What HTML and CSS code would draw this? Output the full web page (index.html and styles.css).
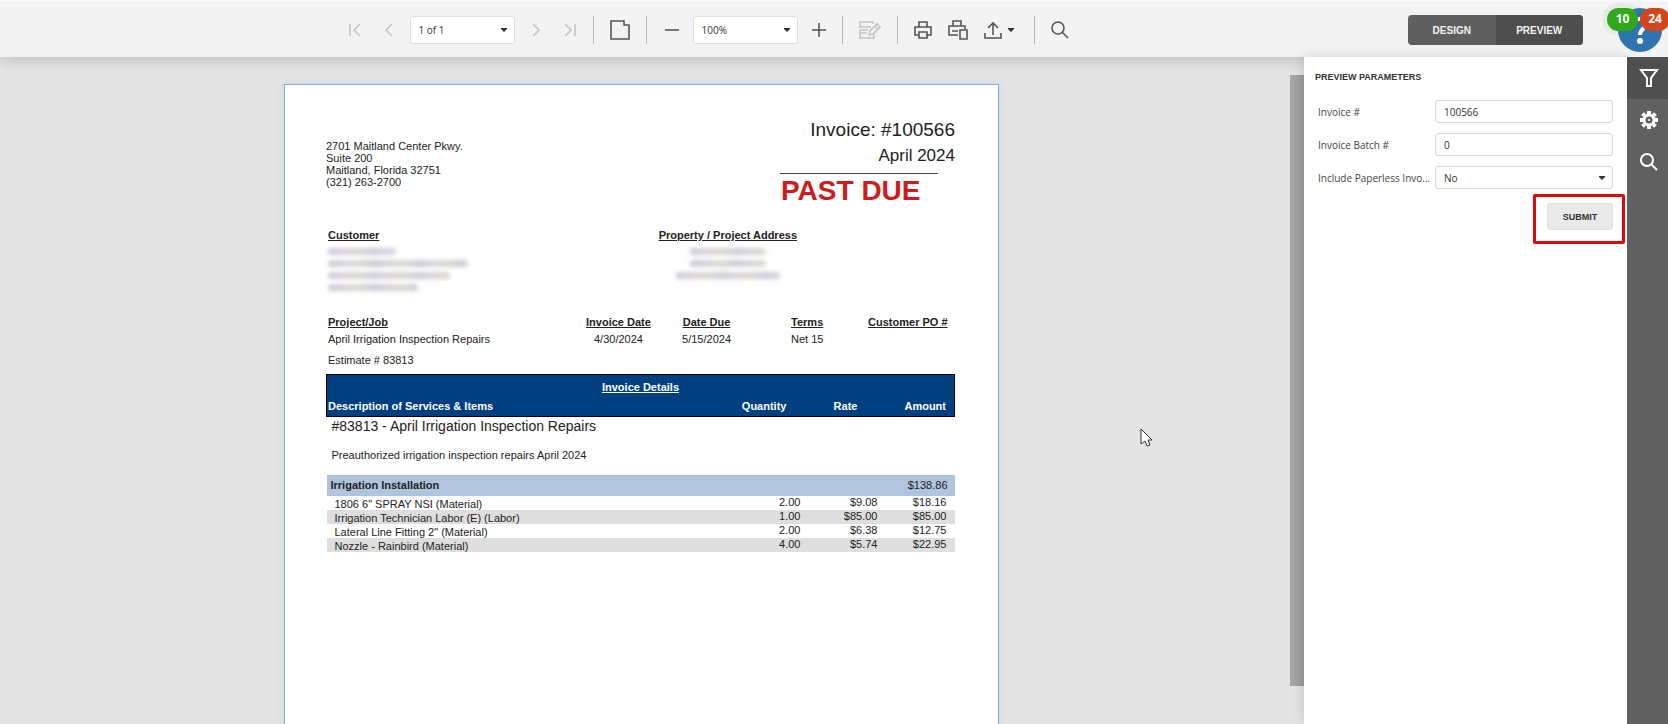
FILE: index.html
```html
<!DOCTYPE html>
<html lang="en">
<head>
<meta charset="utf-8">
<title>Invoice Preview</title>
<link rel="stylesheet" href="styles.css">
</head>
<body>
<div class="app">
  <header class="topbar">
    <div class="tools" role="toolbar" aria-label="Report viewer">
      <button class="tool muted first" aria-label="First page"><svg width="14" height="14" viewBox="0 0 14 14"><path d="M2 1v12M12 1L6 7l6 6"/></svg></button>
      <button class="tool muted prev" aria-label="Previous page"><svg width="10" height="14" viewBox="0 0 10 14"><path d="M8 1L2 7l6 6"/></svg></button>
      <span class="picker pager"><select aria-label="Page"><option>1 of 1</option></select><svg class="caret" width="6" height="4" viewBox="0 0 6 4"><path d="M0 0h6v1L3 4 0 1z"/></svg></span>
      <button class="tool muted next" aria-label="Next page"><svg width="10" height="14" viewBox="0 0 10 14"><path d="M2 1l6 6-6 6"/></svg></button>
      <button class="tool muted last" aria-label="Last page"><svg width="14" height="14" viewBox="0 0 14 14"><path d="M12 1v12M2 1l6 6-6 6"/></svg></button>
      <span class="sep"></span>
      <button class="tool" aria-label="Multipage mode"><svg width="20" height="20" viewBox="0 0 20 20"><path d="M1 1h13v4h5v14H1z"/></svg></button>
      <span class="sep"></span>
      <div class="zooming">
        <button class="tool" aria-label="Zoom out"><svg width="14" height="14" viewBox="0 0 14 14"><path d="M0 7h14"/></svg></button>
        <span class="picker zoom"><select aria-label="Zoom"><option>100%</option></select><svg class="caret" width="6" height="4" viewBox="0 0 6 4"><path d="M0 0h6v1L3 4 0 1z"/></svg></span>
        <button class="tool" aria-label="Zoom in"><svg width="14" height="14" viewBox="0 0 14 14"><path d="M0 7h14M7 0v14"/></svg></button>
      </div>
      <span class="sep"></span>
      <button class="tool muted" aria-label="Highlight editing fields"><svg width="22" height="20" viewBox="0 0 22 20"><path d="M14 4V2H1v5h11M9 10H1M1 10v8h14v-4M1 13h7M10 15l1-4 7-7 3 3-7 7zM16 6l3 3"/></svg></button>
      <span class="sep"></span>
      <button class="tool" aria-label="Print"><svg width="18" height="18" viewBox="0 0 18 18"><path d="M5 6V1h8v5M5 14H1V6h16v8h-4M5 11h8v6H5z"/></svg></button>
      <button class="tool" aria-label="Print page"><svg width="20" height="20" viewBox="0 0 20 20"><path d="M5 6V1h8v5M10 15H1V6h16v3M4 11h6M12 10h7v9h-7z"/></svg></button>
      <button class="tool export" aria-label="Export to"><svg width="18" height="18" viewBox="0 0 18 18"><path d="M1 12v5h16v-5M9 14V2M4 7l5-5 5 5"/></svg><svg class="caret" width="6" height="4" viewBox="0 0 6 4"><path d="M0 0h6v1L3 4 0 1z"/></svg></button>
      <span class="sep"></span>
      <button class="tool" aria-label="Search"><svg width="18" height="18" viewBox="0 0 18 18"><circle cx="7" cy="7" r="6"/><path d="M11 11l6 6"/></svg></button>
    </div>
    <div class="modes">
      <button>DESIGN</button><button class="on">PREVIEW</button>
    </div>
    <button class="help" aria-label="Help">
      <svg width="44" height="44" viewBox="0 0 44 44"><circle cx="22" cy="22" r="22" fill="#2d74b0"/><path d="M16 16c1-7 13-7 12 0-1 5-6 5-6 11" fill="none" stroke="#fff" stroke-width="4"/><circle cx="22" cy="33" r="3" fill="#fff"/></svg>
      <span class="badge green">10</span><span class="badge red">24</span>
    </button>
  </header>

  <div class="body">
    <main class="viewer">
      <article class="paper">
        <section class="head">
          <address>2701 Maitland Center Pkwy.<br>Suite 200<br>Maitland, Florida 32751<br>(321) 263-2700</address>
          <div class="title">
            <h1>Invoice: #100566</h1>
            <p class="month">April 2024</p>
            <p class="due">PAST DUE</p>
          </div>
        </section>
        <section class="parties">
          <div class="party">
            <h2>Customer</h2>
            <i class="smear w1"></i><i class="smear w2"></i><i class="smear w3"></i><i class="smear w4"></i>
          </div>
          <div class="party site">
            <h2>Property / Project Address</h2>
            <i class="smear w5"></i><i class="smear w5"></i><i class="smear w6"></i>
          </div>
        </section>
        <table class="meta">
          <thead><tr><th class="job">Project/Job</th><th class="date">Invoice Date</th><th class="dued">Date Due</th><th class="terms">Terms</th><th class="po">Customer PO #</th></tr></thead>
          <tbody><tr><td class="job">April Irrigation Inspection Repairs</td><td>4/30/2024</td><td>5/15/2024</td><td>Net 15</td><td></td></tr></tbody>
        </table>
        <p class="estimate">Estimate # 83813</p>
        <section class="details">
          <table class="lines">
            <colgroup><col><col class="c-qty"><col class="c-num"><col class="c-num"></colgroup>
            <thead>
              <tr class="cap"><th colspan="4">Invoice Details</th></tr>
              <tr class="cols"><th class="desc">Description of Services &amp; Items</th><th class="qty">Quantity</th><th class="rate">Rate</th><th class="amt">Amount</th></tr>
            </thead>
            <tbody>
              <tr class="job-name"><td colspan="4">#83813 - April Irrigation Inspection Repairs</td></tr>
              <tr class="note"><td colspan="4">Preauthorized irrigation inspection repairs April 2024</td></tr>
              <tr class="group"><th colspan="3">Irrigation Installation</th><td>$138.86</td></tr>
              <tr class="item"><td>1806 6" SPRAY NSI (Material)</td><td>2.00</td><td>$9.08</td><td>$18.16</td></tr>
              <tr class="item"><td>Irrigation Technician Labor (E) (Labor)</td><td>1.00</td><td>$85.00</td><td>$85.00</td></tr>
              <tr class="item"><td>Lateral Line Fitting 2" (Material)</td><td>2.00</td><td>$6.38</td><td>$12.75</td></tr>
              <tr class="item"><td>Nozzle - Rainbird (Material)</td><td>4.00</td><td>$5.74</td><td>$22.95</td></tr>
            </tbody>
          </table>
        </section>
      </article>
    </main>
    <div class="scroll"><div class="thumb"></div></div>
    <form class="params">
      <h2>PREVIEW PARAMETERS</h2>
      <div class="field"><label for="inv">Invoice #</label><input id="inv" type="text" value="100566"></div>
      <div class="field"><label for="batch">Invoice Batch #</label><input id="batch" type="text" value="0"></div>
      <div class="field"><label for="paper">Include Paperless Invo...</label><span class="picker"><select id="paper"><option>No</option></select><svg class="caret" width="6" height="4" viewBox="0 0 6 4"><path d="M0 0h6v1L3 4 0 1z"/></svg></span></div>
      <div class="callout"><button type="button">SUBMIT</button></div>
    </form>
    <nav class="rail" aria-label="Panels">
      <button class="on" aria-label="Parameters"><svg width="20" height="20" viewBox="0 0 20 20"><path d="M2 2h16l-6 8v8H8v-8z"/></svg></button>
      <button aria-label="Settings"><svg width="20" height="20" viewBox="0 0 20 20"><circle cx="10" cy="10" r="5" stroke-width="3"/><path stroke-width="4" d="M10 1v3M10 16v3M1 10h3M16 10h3M3.600 3.600l2 2M14.400 14.400l2 2M3.600 16.400l2-2M14.400 5.600l2-2"/><circle cx="10" cy="10" r="1" fill="#fff" stroke="none"/></svg></button>
      <button aria-label="Search"><svg width="20" height="20" viewBox="0 0 20 20"><circle cx="8" cy="8" r="6"/><path d="M12 12l6 6"/></svg></button>
    </nav>
  </div>
  <svg class="pointer" width="13" height="20" viewBox="0 0 13 20"><path d="M1 1v15l4-3 2 5 3-1-2-5h4z" fill="#fff" stroke="#333"/></svg>
</div>
</body>
</html>
```
FILE: styles.css
```css
* { box-sizing: border-box; }
body { margin: 0; overflow: hidden; font-family: "Liberation Sans", Arial, sans-serif; font-size: 11px; color: #222; }
h1, h2, p { margin: 0; font-weight: 400; }
button { border: 0; padding: 0; background: none; font: inherit; color: inherit; }
.app { display: flex; flex-direction: column; height: 100vh; position: relative; background: #e4e4e4; }

/* top bar */
.topbar { display: flex; align-items: center; height: 57px; padding: 2px 0 0; background: #f3f3f3; border-top: 1px solid #fafafa; box-shadow: 0 2px 16px rgba(0, 0, 0, .2); position: relative; z-index: 1; }
.tools { flex: 1; display: flex; align-items: center; justify-content: center; gap: 16px; padding-left: 8px; }
.tool { display: flex; align-items: center; flex: none; }
.tool svg { fill: none; stroke: #555; stroke-width: 1.6; }
.rail svg { fill: none; stroke: #fff; stroke-width: 2; }
.tool.muted svg { stroke: #c4c4c4; }
.first, .next { margin-right: 6px; }
.export { gap: 6px; margin-right: 4px; }
.zooming { display: flex; align-items: center; gap: 14px; margin-left: 2px; }
.sep { width: 1px; height: 28px; background: #b8b8b8; }
.picker { display: grid; align-items: center; }
.picker select { grid-area: 1 / 1; appearance: none; width: 100%; height: 28px; padding: 0 8px; border: 1px solid #dedede; border-radius: 3px; background: #fff; font: 10px "Open Sans", sans-serif; color: #333; }
.tools .picker { width: 105px; }
.caret { grid-area: 1 / 1; justify-self: end; margin-right: 8px; }
.tool .caret { margin: 0; }
.caret, .tool .caret { fill: #333; stroke: none; }
.modes { display: flex; flex: none; width: 175px; height: 30px; margin-right: 35px; border-radius: 4px; overflow: hidden; background: #5f5f5f; color: #f3f3f3; font-size: 10px; font-weight: 700; }
.modes button { flex: 1; }
.modes .on { background: #4e4e4e; }
.help { position: relative; flex: none; width: 44px; height: 44px; margin-right: 6px; }
.help svg { display: block; }
.badge { position: absolute; top: 0; height: 23px; border-radius: 12px; font: 700 12px/22px "Open Sans", sans-serif; color: #fff; text-align: center; }
.green { left: -11px; width: 31px; background: #2fa81b; box-shadow: 0 0 0 5px rgba(47, 168, 27, .07); }
.red { left: 22px; width: 30px; background: #d3451a; }

/* viewer */
.body { flex: 1; min-height: 0; display: flex; }
.viewer { flex: 1; overflow: hidden; padding: 27px 7px 0 0; }
.paper { width: 715px; min-height: 924px; margin: 0 auto; padding: 34px 43px 0 41px; background: #fff; border: 1px solid #7fabdc; box-shadow: 0 0 8px #cdd4de; line-height: 12px; }
.head { display: flex; justify-content: space-between; align-items: flex-start; height: 105px; }
address { padding-top: 21px; font-style: normal; }
.title { text-align: right; }
h1 { font-size: 19px; line-height: 22px; }
.month { font-size: 17px; line-height: 18px; padding-top: 6px; }
.due { width: 158px; margin: 8px 17px 0 0; border-top: 1px solid #444; color: #d01a1e; font-size: 28px; font-weight: 700; line-height: 34px; text-align: left; padding-left: 1px; }
.parties { display: flex; justify-content: space-between; height: 92px; padding: 5px 158px 0 2px; }
.party { display: flex; flex-direction: column; gap: 5px; }
.party h2 { font-size: 11px; font-weight: 700; text-decoration: underline; margin-bottom: 2px; }
.site { align-items: center; }
.smear { height: 7px; border-radius: 4px; background: repeating-linear-gradient(90deg, #c9c9d2, #d8d2dc 16px, #d9d8cc 30px, #cccfdc 44px); filter: blur(2px); }
.w1 { width: 68px; } .w2 { width: 140px; } .w3 { width: 122px; } .w4 { width: 90px; } .w5 { width: 76px; } .w6 { width: 104px; }
table { width: 100%; border-collapse: collapse; table-layout: fixed; }
th, td { padding: 0; }
.meta th { text-decoration: underline; padding-bottom: 5px; }
.meta td { text-align: center; }
.meta .job { width: 40%; text-align: left; padding-left: 2px; }
.meta .date { width: 13%; } .meta .dued { width: 15%; } .meta .terms { width: 17%; }
.estimate { padding: 9px 0 8px 2px; }
.c-qty { width: 80px; }
.c-num { width: 77px; }
.lines thead { background: #004080; color: #fff; border: 1px solid #000; }
.cap th { padding: 6px 0 7px; font-size: 11px; text-decoration: underline; }
.cols th { padding: 0 8px 4px 0; text-align: right; }
.cols .desc { padding-left: 1px; text-align: left; }
.cols .qty { padding-right: 14px; }
.cols .rate { padding-right: 20px; }
.job-name td { padding: 0 5px; font-size: 14px; line-height: 18px; height: 32px; vertical-align: top; }
.note td { padding: 0 5px 14px; }
.group { background: #b0c4de; height: 21px; }
.group th { text-align: left; padding-left: 4px; }
.group td { text-align: right; padding-right: 7px; }
.item td { text-align: right; padding-bottom: 2px; }
.item td:first-child { text-align: left; padding: 2px 0 0 8px; }
.item td:last-child { padding-right: 8px; }
.item:nth-child(odd) { background: #dedede; }

.scroll { flex: none; width: 14px; padding: 18px 0 38px; }
.thumb { height: 100%; background: linear-gradient(90deg, #a9a9a9, #9c9c9c); }

/* parameters */
.params { position: relative; z-index: 2; flex: none; width: 323px; padding: 14px 14px 0 11px; background: #fff; font-family: "Open Sans", sans-serif; box-shadow: 0 0 12px rgba(0, 0, 0, .15); }
.params h2 { font: 700 9px/12px "Liberation Sans", sans-serif; margin-bottom: 17px; color: #333; }
.field { display: grid; grid-template-columns: 117px 1fr; align-items: center; height: 23px; margin: 0 0 10px 3px; font-size: 10px; white-space: nowrap; color: #444; }
.field input, .field .picker select { width: 100%; height: 23px; padding: 0 8px; border: 1px solid #d8d8d8; border-radius: 3px; font: 10px "Open Sans", sans-serif; color: #333; background: #fff; }
.callout { width: 92px; height: 50px; margin: -5px -12px 0 auto; padding: 6px 9px; border: 3px solid #dc0a0c; border-radius: 2px; }
.callout button { display: block; width: 66px; height: 27px; margin-left: 2px; border: 1px solid #e0e0e0; border-radius: 3px; background: #e9e9e9; font: 700 9px "Liberation Sans", sans-serif; color: #333; }
.rail { position: relative; z-index: 2; flex: none; width: 41px; background: #606060; }
.rail button { display: flex; width: 100%; height: 42px; align-items: center; justify-content: center; padding-left: 2px; }
.rail .on { background: #4f4f4f; }

.pointer { position: absolute; left: 1140px; top: 428px; }
```
